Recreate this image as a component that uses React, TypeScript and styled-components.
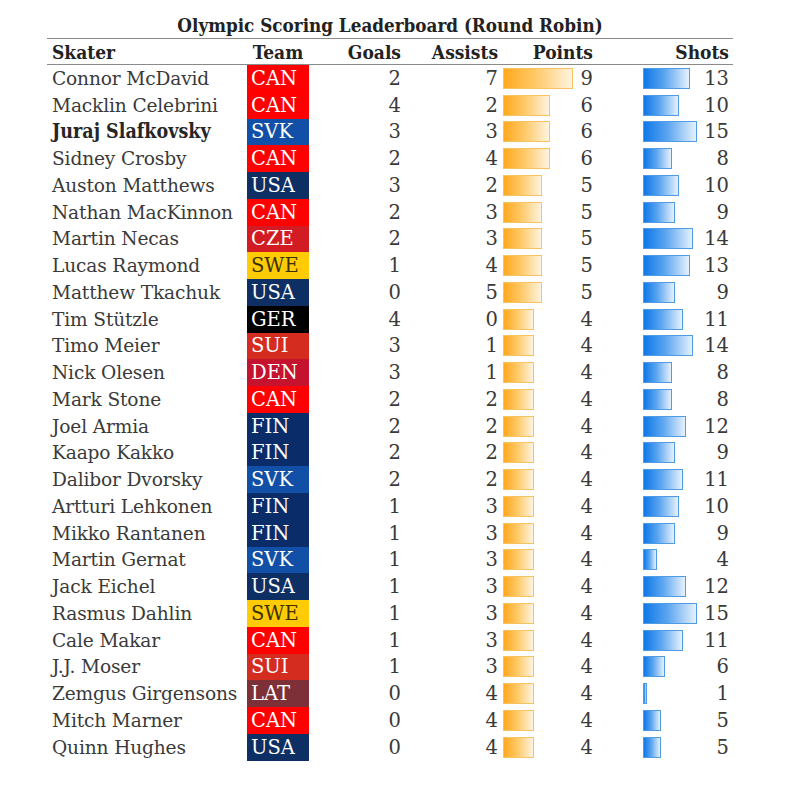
import React from "react";
import styled, { createGlobalStyle } from "styled-components";

const GlobalStyle = createGlobalStyle`
  html, body { margin: 0; padding: 0; background: #ffffff; }
  body { font-family: "DejaVu Serif", "Liberation Serif", serif; color: #333; }
`;

type Row = { name: string; team: string; g: number; a: number; bold?: boolean; shots: number };

const data: Row[] = [
  { name: "Connor McDavid", team: "CAN", g: 2, a: 7, shots: 13 },
  { name: "Macklin Celebrini", team: "CAN", g: 4, a: 2, shots: 10 },
  { name: "Juraj Slafkovsky", team: "SVK", g: 3, a: 3, shots: 15, bold: true },
  { name: "Sidney Crosby", team: "CAN", g: 2, a: 4, shots: 8 },
  { name: "Auston Matthews", team: "USA", g: 3, a: 2, shots: 10 },
  { name: "Nathan MacKinnon", team: "CAN", g: 2, a: 3, shots: 9 },
  { name: "Martin Necas", team: "CZE", g: 2, a: 3, shots: 14 },
  { name: "Lucas Raymond", team: "SWE", g: 1, a: 4, shots: 13 },
  { name: "Matthew Tkachuk", team: "USA", g: 0, a: 5, shots: 9 },
  { name: "Tim Stützle", team: "GER", g: 4, a: 0, shots: 11 },
  { name: "Timo Meier", team: "SUI", g: 3, a: 1, shots: 14 },
  { name: "Nick Olesen", team: "DEN", g: 3, a: 1, shots: 8 },
  { name: "Mark Stone", team: "CAN", g: 2, a: 2, shots: 8 },
  { name: "Joel Armia", team: "FIN", g: 2, a: 2, shots: 12 },
  { name: "Kaapo Kakko", team: "FIN", g: 2, a: 2, shots: 9 },
  { name: "Dalibor Dvorsky", team: "SVK", g: 2, a: 2, shots: 11 },
  { name: "Artturi Lehkonen", team: "FIN", g: 1, a: 3, shots: 10 },
  { name: "Mikko Rantanen", team: "FIN", g: 1, a: 3, shots: 9 },
  { name: "Martin Gernat", team: "SVK", g: 1, a: 3, shots: 4 },
  { name: "Jack Eichel", team: "USA", g: 1, a: 3, shots: 12 },
  { name: "Rasmus Dahlin", team: "SWE", g: 1, a: 3, shots: 15 },
  { name: "Cale Makar", team: "CAN", g: 1, a: 3, shots: 11 },
  { name: "J.J. Moser", team: "SUI", g: 1, a: 3, shots: 6 },
  { name: "Zemgus Girgensons", team: "LAT", g: 0, a: 4, shots: 1 },
  { name: "Mitch Marner", team: "CAN", g: 0, a: 4, shots: 5 },
  { name: "Quinn Hughes", team: "USA", g: 0, a: 4, shots: 5 },
];

const teamColors: Record<string, { bg: string; fg: string }> = {
  CAN: { bg: "#ff0000", fg: "#ffffff" },
  SVK: { bg: "#1150a6", fg: "#ffffff" },
  USA: { bg: "#0e2f64", fg: "#ffffff" },
  CZE: { bg: "#d21b22", fg: "#ffffff" },
  SWE: { bg: "#fecb05", fg: "#3a3000" },
  GER: { bg: "#000000", fg: "#ffffff" },
  SUI: { bg: "#d42c1f", fg: "#ffffff" },
  DEN: { bg: "#c5122f", fg: "#ffffff" },
  FIN: { bg: "#0a2d6a", fg: "#ffffff" },
  LAT: { bg: "#7d3038", fg: "#ffffff" },
};

const COLS = "200px 62px 92px 97px 95px 140px";

const Page = styled.div`
  padding: 13px 0 0 47px;
`;

const Board = styled.div`
  width: 686px;
`;

const Title = styled.div`
  font-family: "DejaVu Serif Condensed", "DejaVu Serif", serif;
  font-stretch: condensed;
  font-weight: bold;
  font-size: 18.7px;
  color: #222;
  text-align: center;
  height: 25px;
  line-height: 25px;
  border-bottom: 1.5px solid #8a8a8a;
`;

const HeaderRow = styled.div`
  display: grid;
  grid-template-columns: ${COLS};
  height: 25px;
  align-items: center;
  border-bottom: 1.5px solid #8a8a8a;
  font-family: "DejaVu Serif Condensed", "DejaVu Serif", serif;
  font-stretch: condensed;
  font-weight: bold;
  font-size: 19px;
  color: #222;
`;

const HeadCell = styled.div<{ $align: "left" | "center" | "right"; $pl?: number; $pr?: number }>`
  text-align: ${(p) => p.$align};
  padding-left: ${(p) => p.$pl ?? 0}px;
  padding-right: ${(p) => p.$pr ?? 0}px;
`;

const DataRow = styled.div`
  display: grid;
  grid-template-columns: ${COLS};
  height: 26.75px;
  align-items: stretch;
  font-size: 18.6px;
  color: #3a3a3a;
`;

const NameCell = styled.div<{ $bold?: boolean }>`
  display: flex;
  align-items: center;
  padding-left: 5px;
  white-space: nowrap;
  letter-spacing: ${(p) => (p.$bold ? "0" : "-0.15px")};
  font-family: ${(p) =>
    p.$bold ? `"DejaVu Serif Condensed", "DejaVu Serif", serif` : `"DejaVu Serif", serif`};
  font-stretch: ${(p) => (p.$bold ? "condensed" : "normal")};
  font-size: ${(p) => (p.$bold ? "19.5px" : "18.6px")};
  font-weight: ${(p) => (p.$bold ? "bold" : "normal")};
  color: ${(p) => (p.$bold ? "#262626" : "#3a3a3a")};
`;

const TeamCell = styled.div<{ $bg: string; $fg: string }>`
  display: flex;
  align-items: center;
  padding-left: 4px;
  font-size: 19.5px;
  background: ${(p) => p.$bg};
  color: ${(p) => p.$fg};
`;

const NumCell = styled.div`
  display: flex;
  align-items: center;
  justify-content: flex-end;
  font-size: 19.5px;
`;

const BarCell = styled.div<{ $pl: number; $pr: number }>`
  display: flex;
  align-items: center;
  font-size: 19.5px;
  padding-left: ${(p) => p.$pl}px;
  padding-right: ${(p) => p.$pr}px;
`;

const Bar = styled.div<{ $kind: "points" | "shots" }>`
  height: 21px;
  box-sizing: border-box;
  flex: none;
  border: 1px solid ${(p) => (p.$kind === "points" ? "#f7c260" : "#4f9be6")};
  background: ${(p) =>
    p.$kind === "points"
      ? "linear-gradient(to right, #ffa91f 0%, #ffc865 45%, #fff4e0 100%)"
      : "linear-gradient(to right, #0f78e8 0%, #5aa5f0 45%, #e6f1fd 100%)"};
`;

const BarValue = styled.span`
  margin-left: auto;
`;

export default function App() {
  return (
    <>
      <GlobalStyle />
      <Page>
        <Board>
          <Title>Olympic Scoring Leaderboard (Round Robin)</Title>
          <HeaderRow>
            <HeadCell $align="left" $pl={5}>Skater</HeadCell>
            <HeadCell $align="center">Team</HeadCell>
            <HeadCell $align="right">Goals</HeadCell>
            <HeadCell $align="right">Assists</HeadCell>
            <HeadCell $align="right">Points</HeadCell>
            <HeadCell $align="right" $pr={4}>Shots</HeadCell>
          </HeaderRow>
          {data.map((r) => {
            const pts = r.g + r.a;
            const tc = teamColors[r.team];
            return (
              <DataRow key={r.name}>
                <NameCell $bold={r.bold}>{r.name}</NameCell>
                <TeamCell $bg={tc.bg} $fg={tc.fg}>{r.team}</TeamCell>
                <NumCell>{r.g}</NumCell>
                <NumCell>{r.a}</NumCell>
                <BarCell $pl={5} $pr={0}>
                  <Bar $kind="points" style={{ width: `${(pts / 9) * 70}px` }} />
                  <BarValue>{pts}</BarValue>
                </BarCell>
                <BarCell $pl={50} $pr={4}>
                  <Bar $kind="shots" style={{ width: `${Math.max(3, (r.shots / 15) * 54)}px` }} />
                  <BarValue>{r.shots}</BarValue>
                </BarCell>
              </DataRow>
            );
          })}
        </Board>
      </Page>
    </>
  );
}
